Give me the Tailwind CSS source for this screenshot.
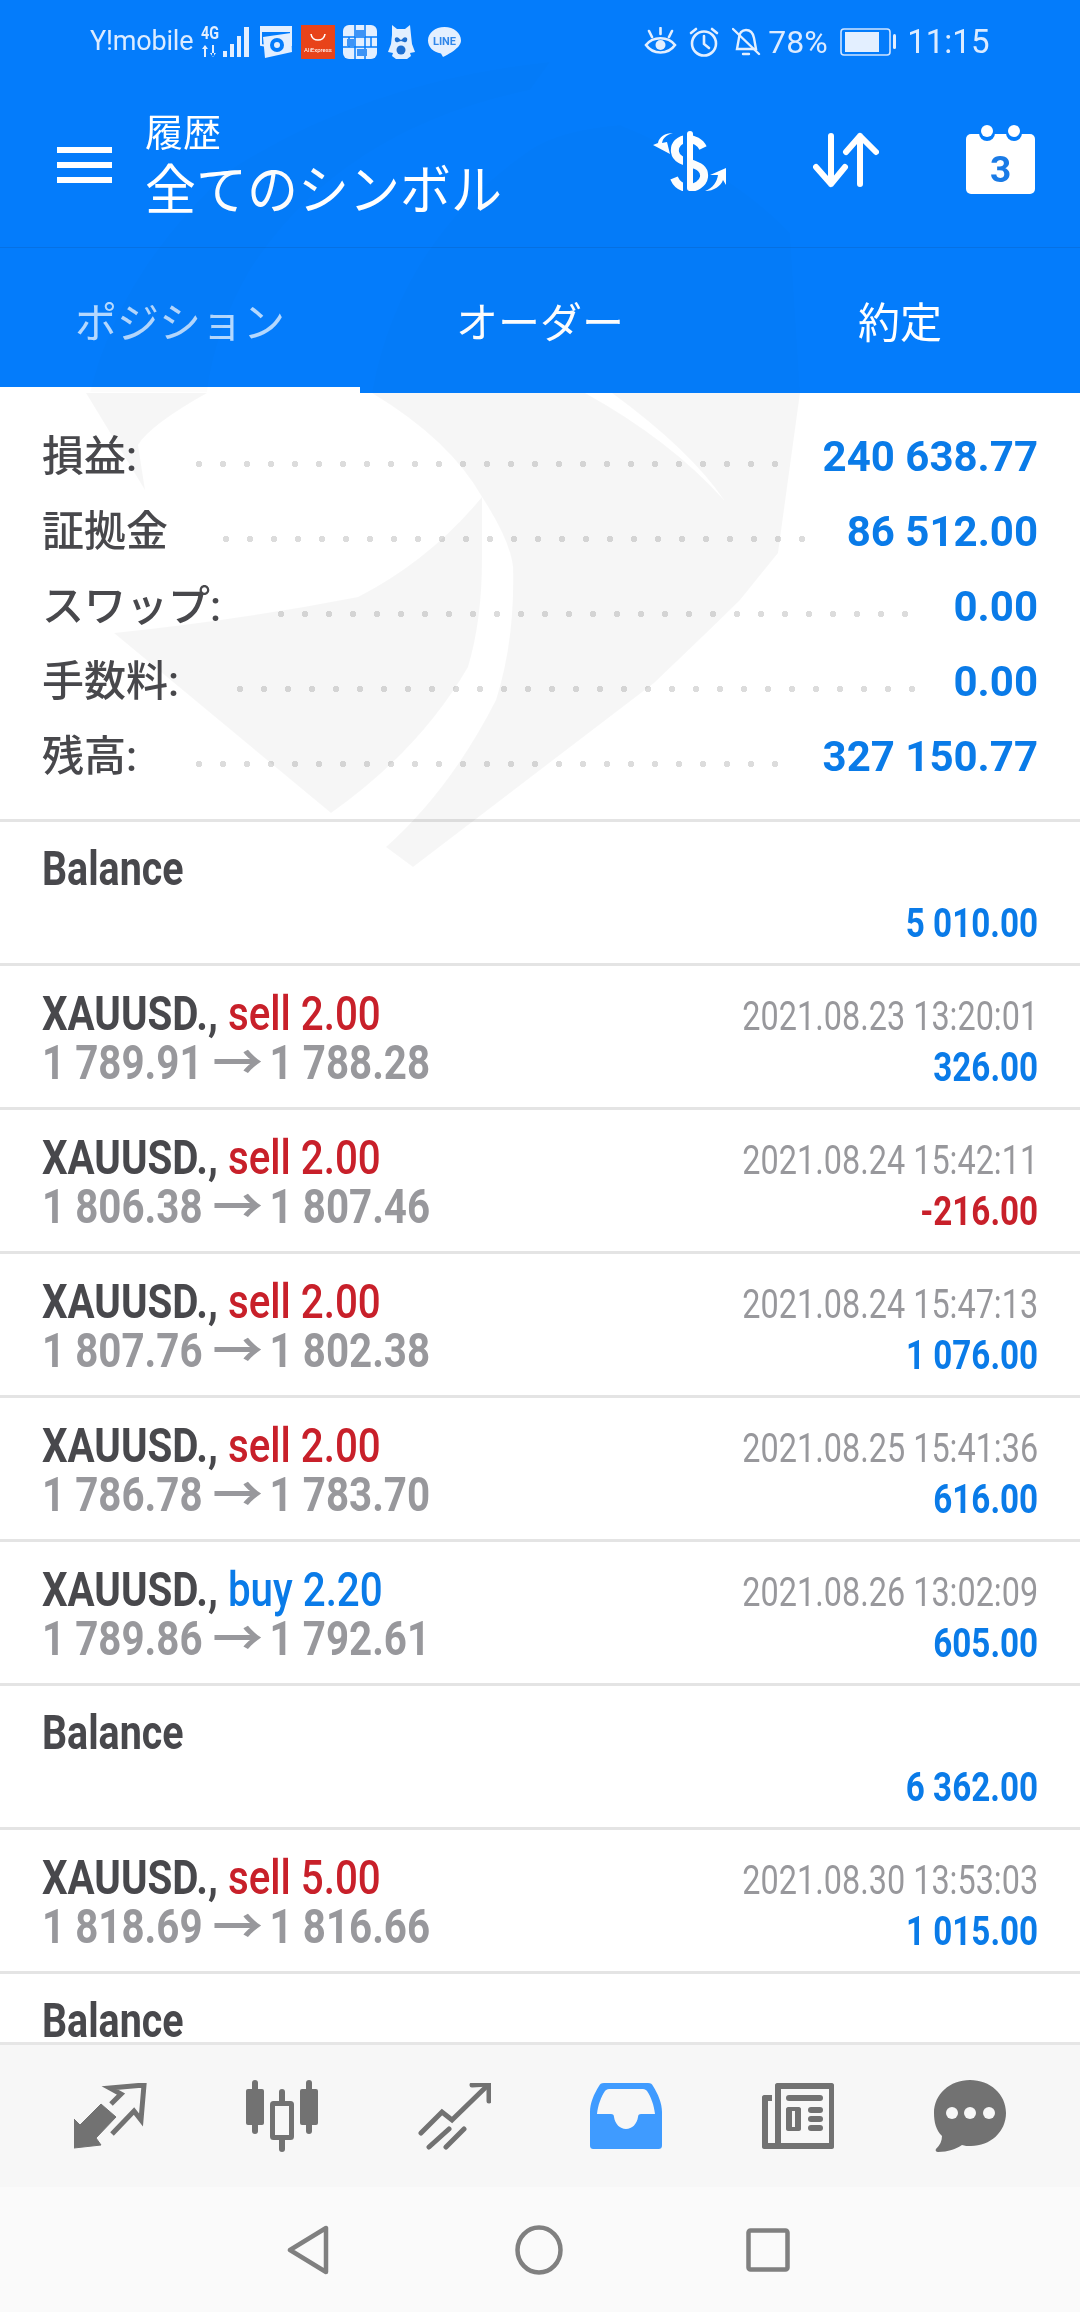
<!DOCTYPE html>
<html lang="ja">
<head>
  <meta charset="UTF-8" />
  <meta name="viewport" content="width=device-width, initial-scale=1.0" />
  <title>履歴</title>
  <script src="https://cdn.jsdelivr.net/npm/@tailwindcss/browser@4"></script>
</head>
<body class="bg-white [font-family:Roboto,'Noto_Sans_CJK_JP',sans-serif]">
  <div class="relative w-[1080px] h-[2312px] overflow-hidden flex flex-col">

    <!-- Blue top area -->
    <div class="bg-[#047cfb] text-white shrink-0">
      <!-- Status bar -->
      <div class="h-[75px] flex items-center pt-[8px] pl-[90px] pr-[90px] text-[#dcebff]">
        <span class="text-[27px] tracking-[-0.2px] leading-none">Y!mobile</span>
        <svg class="ml-[8px] overflow-visible" width="50" height="34" viewBox="0 0 50 34" fill="#e3efff">
          <text x="0" y="14" font-size="18" font-weight="700" font-family="Roboto" textLength="18" lengthAdjust="spacingAndGlyphs">4G</text>
          <path d="M3 21h2v11H3zM1 24l3-4 3 4zM11 20h2v11h-2zM9 28l3 4 3-4z"/>
          <rect x="22" y="26" width="4" height="6"/><rect x="29" y="19" width="4" height="13"/><rect x="36" y="11" width="4" height="21"/><rect x="43" y="2" width="5" height="30"/>
        </svg>
        <svg class="ml-[9px]" width="32" height="34" viewBox="0 0 32 34">
          <path d="M1 2l30-1v6l-30 0z" fill="#e3efff"/>
          <path d="M1 2h30v18l-24 1-6-1z" fill="none" stroke="#e3efff" stroke-width="2"/>
          <path d="M3 12l28-4 1 19-27 6z" fill="#e3efff"/>
          <circle cx="17" cy="20" r="7" fill="#047cfb"/><circle cx="17" cy="20" r="3" fill="#e3efff"/>
        </svg>
        <svg class="ml-[9px]" width="34" height="34" viewBox="0 0 34 34">
          <rect width="34" height="34" fill="#e8431a"/>
          <path d="M10 9c1 8 13 8 14 0" fill="none" stroke="#fff" stroke-width="1.6"/>
          <text x="17" y="27" font-size="6" fill="#fff" text-anchor="middle" font-family="Roboto">AliExpress</text>
        </svg>
        <svg class="ml-[8px]" width="34" height="34" viewBox="0 0 34 34">
          <rect width="34" height="34" rx="6" fill="#e3efff"/>
          <path d="M12 0v34M22 0v34M0 12h34M0 22h34M6 12v10M28 12v10" stroke="#047cfb" stroke-width="1.5"/>
          <rect x="12" y="5" width="10" height="7" fill="#3d93f5"/><rect x="14" y="24" width="10" height="7" fill="#3d93f5"/><rect x="4" y="14" width="7" height="7" fill="#3d93f5"/>
        </svg>
        <svg class="ml-[10px]" width="28" height="34" viewBox="0 0 28 34">
          <path d="M5 0l5 4h8l5-4 1 10 1 9 3 8-5 1 1 3-4 3H9l-4-3 1-3-5-1 3-8 1-9z" fill="#e3efff"/>
          <path d="M8 13c3-2 4 1 6 2 2-1 3-4 6-2 1 3-1 5-3 4l-3-1-3 1c-2 1-4-1-3-4z" fill="#1f6fd0"/>
          <circle cx="14" cy="25" r="4.5" fill="#1f6fd0"/>
        </svg>
        <svg class="ml-[13px]" width="33" height="30" viewBox="0 0 33 30">
          <path d="M16.500 0C7 0 0 6 0 13.500 0 20 5 25 13 26.500l2 3.500c5-2.500 18-9 18-16.500C33 6 26 0 16.500 0z" fill="#e3efff"/>
          <text x="16.500" y="18" font-size="11" font-weight="700" fill="#2f86ea" text-anchor="middle" font-family="Roboto">LINE</text>
        </svg>

        <svg class="ml-[183px]" width="33" height="30" viewBox="0 0 33 30" fill="none" stroke="#e3efff" stroke-width="2.600">
          <path d="M2 18c7-9 22-9 29 0-7 10-22 10-29 0z"/>
          <circle cx="16.500" cy="18" r="5" fill="#e3efff" stroke="none"/>
          <path d="M16.500 1v6M5 4l3 6M28 4l-3 6" stroke-linecap="round"/>
        </svg>
        <svg class="ml-[12px]" width="30" height="30" viewBox="0 0 30 30" fill="none" stroke="#e3efff" stroke-width="2.600">
          <circle cx="15" cy="16.500" r="12"/>
          <path d="M15 9v8l5 4M2 6l5-4M28 6l-5-4" stroke-linecap="round"/>
        </svg>
        <svg class="ml-[13px]" width="29" height="29" viewBox="0 0 29 29" fill="none" stroke="#e3efff" stroke-width="2.400">
          <path d="M7 11c0-5 3-8 7-8s7 3 8 8l2 11H5z"/>
          <path d="M1 2l26 25M11 27h6" stroke-linecap="round"/>
        </svg>
        <span class="ml-[7px] w-[62px] text-[32px] leading-none">78%</span>
        <svg class="ml-[10px]" width="56" height="28" viewBox="0 0 56 28">
          <rect x="1" y="1" width="49" height="26" rx="3" fill="none" stroke="#cfe3ff" stroke-width="1.600"/>
          <rect x="5" y="4" width="34" height="20" fill="#e3efff"/>
          <rect x="53" y="6" width="3" height="15" rx="1.500" fill="#e3efff"/>
        </svg>
        <span class="ml-[11px] text-[33px] leading-none">11:15</span>
      </div>

      <!-- Header -->
      <header class="h-[173px] flex items-center border-b border-[#0671e4]">
        <div class="ml-[57px] mt-[8px] w-[55px] flex flex-col gap-[9px]">
          <div class="h-[6px] bg-white"></div>
          <div class="h-[6px] bg-white"></div>
          <div class="h-[6px] bg-white"></div>
        </div>
        <div class="ml-[33px] w-[508px] mt-[10px]">
          <div class="text-[38px] leading-[46px]">履歴</div>
          <div class="text-[51px] leading-[62px] mt-[5px] origin-left scale-y-[1.06]">全てのシンボル</div>
        </div>
        <svg width="73" height="60" viewBox="0 0 73 60">
          <path d="M50 17C47 11 41 8 35 8 26 8 21 14 22 21c1 7 8 9 15 11 9 3 15 6 14 14-1 7-9 11-15 11-6 0-12-3-15-10" fill="none" stroke="#fff" stroke-width="8"/>
          <path d="M30 0h6v60h-6z" fill="#047cfb"/>
          <rect x="34" y="0" width="6" height="60" rx="3" fill="#fff"/>
          <path d="M20 2C13 4 10 7 9 12l5-1 3 12L0 14l5-2C6 6 12 2 20 2z" fill="#fff"/>
          <path d="M52 60c8-3 12-9 13-16l-8 0 16-7 0 17-3-5c-2 6-9 11-18 11z" fill="#fff"/>
        </svg>
        <svg class="ml-[87px] -mt-[2px]" width="66" height="56" viewBox="0 0 66 56" fill="none" stroke="#fff" stroke-width="6" stroke-linecap="round" stroke-linejoin="round">
          <path d="M18 4v48M3 35l15 17 14-17"/>
          <path d="M47 4v48M33 20L47 4l16 16"/>
        </svg>
        <svg class="ml-[87px] -mt-[4px]" width="69" height="69" viewBox="0 0 69 69">
          <rect x="0" y="9" width="69" height="60" rx="5" fill="#fff"/>
          <circle cx="21" cy="8" r="8" fill="#047cfb"/><circle cx="48" cy="8" r="8" fill="#047cfb"/>
          <circle cx="21" cy="6" r="6" fill="#fff"/><circle cx="48" cy="6" r="6" fill="#fff"/>
          <text x="34.500" y="57" font-size="37" font-weight="700" fill="#1a7be6" text-anchor="middle" font-family="Roboto">3</text>
        </svg>
      </header>

      <!-- Tabs -->
      <nav class="h-[145px] flex text-[42px]">
        <div class="relative w-[360px] flex items-center justify-center text-white/70 pt-[6px]">
          ポジション
          <div class="absolute left-0 right-0 bottom-0 h-[6px] bg-white"></div>
        </div>
        <div class="w-[360px] flex items-center justify-center pt-[6px]">オーダー</div>
        <div class="w-[360px] flex items-center justify-center pt-[6px]">約定</div>
      </nav>
    </div>

    <!-- Scroll content -->
    <main class="flex-1 overflow-hidden">
      <!-- Summary -->
      <section id="summary" class="h-[429px] pt-[26px] border-b-[3px] border-[#e4e4e4]"></section>
      <!-- Deals -->
      <section id="deals"></section>
    </main>

    <!-- Bottom tab bar -->
    <div class="h-[145px] shrink-0 bg-[#f7f7f7] border-t-[3px] border-[#e6e6e6] flex items-center px-[24px] relative">
      <div class="w-[172px] flex justify-center">
        <svg width="73" height="67" viewBox="0 0 73 67">
          <path d="M0 65V36l6 6 21-21 15 13-20 21 5 7z" fill="#727272" stroke="#727272" stroke-width="1" stroke-linejoin="round"/>
          <path d="M37 21L47 11 36 5 70 2 67 37 60 28 38 51" fill="none" stroke="#727272" stroke-width="5"/>
        </svg>
      </div>
      <div class="w-[172px] flex justify-center">
        <svg width="72" height="72" viewBox="0 0 72 72">
          <g fill="#727272">
            <rect x="0" y="9" width="18" height="36" rx="2"/><rect x="6" y="0" width="6" height="54" rx="3"/>
            <rect x="54" y="9" width="18" height="36" rx="2"/><rect x="60" y="0" width="6" height="54" rx="3"/>
            <rect x="33" y="9" width="6" height="63" rx="3"/>
          </g>
          <rect x="26.500" y="23.500" width="19" height="34" rx="1" fill="#f7f7f7" stroke="#727272" stroke-width="5"/>
        </svg>
      </div>
      <div class="w-[172px] flex justify-center">
        <svg width="73" height="67" viewBox="0 0 73 67" fill="none" stroke="#727272" stroke-width="5" stroke-linecap="round">
          <path d="M3 50L24 29l10 8L69 3"/>
          <path d="M54 2L71 1l0 17" stroke-linejoin="round"/>
          <path d="M11 64L31 46M28 64L46 46"/>
        </svg>
      </div>
      <div class="w-[172px] flex justify-center">
        <svg width="72" height="66" viewBox="0 0 72 66">
          <path fill-rule="evenodd" fill="#3f9bff" d="M14 0h44c3 0 4 1 5 3 5 8 9 17 9 26v33c0 3-1 4-4 4H4c-3 0-4-1-4-4V29C0 20 4 11 9 3c1-2 2-3 5-3zM19 6c-2 0-3 1-4 2-4 6-7 14-8 23h14c2 0 3 1 3 3 1 7 6 12 12 12s11-5 12-12c0-2 1-3 3-3h14c-1-9-4-17-8-23-1-1-2-2-4-2z"/>
        </svg>
      </div>
      <div class="w-[172px] flex justify-center">
        <svg width="72" height="66" viewBox="0 0 72 66" fill="#727272">
          <path fill-rule="evenodd" d="M15 0h55c1 0 2 1 2 2v62c0 1-1 2-2 2H2c-1 0-2-1-2-2V14c0-1 1-2 2-2h8v6H6v42h7V2c0-1 1-2 2-2zM19 6v54h48V6z"/>
          <rect x="24" y="12" width="37" height="6" rx="3"/>
          <path fill-rule="evenodd" d="M26 24h11c1 0 2 1 2 2v20c0 1-1 2-2 2H26c-1 0-2-1-2-2V26c0-1 1-2 2-2zM30 28v16h3V28z"/>
          <rect x="46" y="24" width="15" height="6" rx="3"/><rect x="46" y="33" width="15" height="6" rx="3"/><rect x="46" y="42" width="15" height="6" rx="3"/>
        </svg>
      </div>
      <div class="w-[172px] flex justify-center">
        <svg width="73" height="72" viewBox="0 0 73 72">
          <path d="M36 0c20 0 36 14 36 33S56 66 37 66c-4 0-6 0-9-1-6 4-14 7-24 7-2 0-3-2-2-3 4-4 6-8 6-13C2 50 0 42 0 33 0 14 16 0 36 0z" fill="#727272"/>
          <circle cx="18" cy="33" r="6" fill="#f7f7f7"/><circle cx="36" cy="33" r="6" fill="#f7f7f7"/><circle cx="55" cy="33" r="6" fill="#f7f7f7"/>
        </svg>
      </div>
    </div>

    <!-- Android nav -->
    <div class="h-[125px] shrink-0 bg-[#fafafa] flex items-start justify-center pt-[38px] pr-[3px]">
      <svg width="42" height="50" viewBox="0 0 42 50" class="mr-[186px]" fill="none" stroke="#808080" stroke-width="4.500" stroke-linejoin="round">
        <path d="M39 3v44L3 25z"/>
      </svg>
      <svg width="48" height="50" viewBox="0 0 48 50" class="mr-[183px]" fill="none" stroke="#808080" stroke-width="4.500">
        <ellipse cx="24" cy="25" rx="21.500" ry="22.500"/>
      </svg>
      <svg width="44" height="44" viewBox="0 0 44 44" class="mt-[3px]" fill="none" stroke="#808080" stroke-width="4.500" stroke-linejoin="round">
        <rect x="2.500" y="2.500" width="39" height="39" rx="2"/>
      </svg>
    </div>

    <svg class="absolute left-0 top-0 pointer-events-none mix-blend-multiply" width="1080" height="900" viewBox="0 0 1080 900" fill="#000">
      <g fill-opacity="0.012">
        <path d="M90 392Q120 270 230 170 370 80 550 62L530 90Q340 130 250 270 215 330 207 392z"/>
        <path d="M372 392Q400 240 530 150 560 130 620 125 730 170 790 233L800 392z"/>
      </g>
      <g fill-opacity="0.035">
        <path d="M86 393L207 393Q150 425 138 445L145 490z"/>
        <path d="M482 497Q482 530 482 560 482 620 468 667 420 750 331 813L114 633Q240 620 358 597 430 560 482 497z"/>
        <path fill-rule="evenodd" d="M372 393Q450 440 482 497 510 540 513 567 515 640 496 700 450 790 386 847L413 867 654 683Q720 620 740 600L778 553 800 393zM585 393L612 393Q690 450 724 500 670 440 585 393z"/>
      </g>
    </svg>
  </div>

  <script>
    const summary = [
      { label: "損益:", value: "240 638.77", dots: "ml-[50px] w-[600px]" },
      { label: "証拠金", value: "86 512.00", dots: "ml-[46px] w-[600px]" },
      { label: "スワップ:", value: "0.00", dots: "ml-[48px] w-[648px]" },
      { label: "手数料:", value: "0.00", dots: "ml-[49px] w-[696px]" },
      { label: "残高:", value: "327 150.77", dots: "ml-[50px] w-[600px]" },
    ];

    const deals = [
      { balance: "5 010.00" },
      { side: "sell", vol: "2.00", from: "1 789.91", to: "1 788.28", time: "2021.08.23 13:20:01", profit: "326.00" },
      { side: "sell", vol: "2.00", from: "1 806.38", to: "1 807.46", time: "2021.08.24 15:42:11", profit: "-216.00" },
      { side: "sell", vol: "2.00", from: "1 807.76", to: "1 802.38", time: "2021.08.24 15:47:13", profit: "1 076.00" },
      { side: "sell", vol: "2.00", from: "1 786.78", to: "1 783.70", time: "2021.08.25 15:41:36", profit: "616.00" },
      { side: "buy", vol: "2.20", from: "1 789.86", to: "1 792.61", time: "2021.08.26 13:02:09", profit: "605.00" },
      { balance: "6 362.00" },
      { side: "sell", vol: "5.00", from: "1 818.69", to: "1 816.66", time: "2021.08.30 13:53:03", profit: "1 015.00" },
      { balance: "" },
    ];

    document.getElementById("summary").innerHTML = summary.map(({ label, value, dots }) => `
      <div class="h-[75px] flex items-center justify-between pl-[42px] pr-[42px]">
        <div class="flex items-center flex-1">
          <span class="text-[42px] font-medium text-[#48484c] leading-none">${label}</span>
          <span class="${dots} h-[8px] mt-[14px] bg-[radial-gradient(circle,#dcdcdc_3px,transparent_3.5px)] bg-[length:24px_8px]"></span>
        </div>
        <span class="text-[42px] font-bold text-[#0a7be8] leading-none">${value}</span>
      </div>
    `).join("");

    document.getElementById("deals").innerHTML = deals.map(d => {
      if ("balance" in d) {
        return `
          <div class="h-[144px] border-b-[3px] border-[#e4e4e4] px-[42px] pt-[22px] overflow-hidden">
            <div class="text-[48px] font-bold text-[#48484c] leading-[50px] origin-left scale-x-[.82]">Balance</div>
            <div class="text-[40px] font-bold text-[#0a7be8] leading-[44px] mt-[8px] text-right origin-right scale-x-[.83]">${d.balance}</div>
          </div>`;
      }
      const sideColor = d.side === "buy" ? "text-[#0a7be8]" : "text-[#c8202a]";
      const profitColor = d.profit.startsWith("-") ? "text-[#c8202a]" : "text-[#0a7be8]";
      return `
        <div class="h-[144px] border-b-[3px] border-[#e4e4e4] px-[42px] pt-[23px] flex justify-between overflow-hidden">
          <div class="origin-left scale-x-[.84] whitespace-nowrap">
            <div class="text-[48px] leading-[50px]"><span class="font-bold text-[#48484c]">XAUUSD.,</span> <span class="font-medium ${sideColor}">${d.side} ${d.vol}</span></div>
            <div class="text-[48px] leading-[50px] -mt-px text-[#98989c] font-bold">${d.from} <span class="inline-block origin-left scale-x-[1.25] mr-[8px]">→</span> ${d.to}</div>
          </div>
          <div class="text-right mt-[2px] origin-right whitespace-nowrap">
            <div class="text-[40px] leading-[51px] text-[#98989c] scale-x-[.81] origin-right">${d.time}</div>
            <div class="text-[40px] leading-[51px] font-bold scale-x-[.83] origin-right ${profitColor}">${d.profit}</div>
          </div>
        </div>`;
    }).join("");
  </script>
</body>
</html>
